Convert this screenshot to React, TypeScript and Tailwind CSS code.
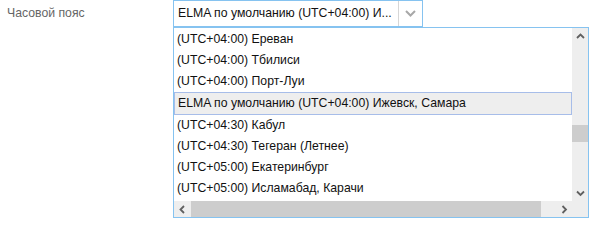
import React from "react";

const rows: { t: string; sel?: boolean }[] = [
  { t: "(UTC+04:00) Ереван" },
  { t: "(UTC+04:00) Тбилиси" },
  { t: "(UTC+04:00) Порт-Луи" },
  { t: "ELMA по умолчанию (UTC+04:00) Ижевск, Самара", sel: true },
  { t: "(UTC+04:30) Кабул" },
  { t: "(UTC+04:30) Тегеран (Летнее)" },
  { t: "(UTC+05:00) Екатеринбург" },
  { t: "(UTC+05:00) Исламабад, Карачи" },
];

function Arrow({ dir }: { dir: "up" | "down" | "left" | "right" }) {
  const d =
    dir === "up"
      ? "M1 5 L4.5 1.5 L8 5"
      : dir === "down"
      ? "M1 1.5 L4.5 5 L8 1.5"
      : dir === "left"
      ? "M5 1 L1.5 4.5 L5 8"
      : "M1.5 1 L5 4.5 L1.5 8";
  const w = dir === "up" || dir === "down" ? 9 : 7;
  const h = dir === "up" || dir === "down" ? 7 : 9;
  return (
    <svg width={w} height={h} viewBox={`0 0 ${w} ${h}`}>
      <path d={d} fill="none" stroke="#606060" strokeWidth="1.8" />
    </svg>
  );
}

export default function App() {
  return (
    <div
      className="flex w-[589px] h-[218px] bg-white text-[12.25px] overflow-hidden"
      style={{ fontFamily: '"Liberation Sans", Arial, sans-serif' }}
    >
      <div className="w-[173px] pl-[7px] leading-[27px] text-[#666666]">Часовой пояс</div>
      <div className="flex flex-col w-[416px]">
        <div className="flex w-[250px] h-[27px] border border-[#86c3f0] bg-white">
          <div className="flex-1 pl-[4px] leading-[25px] text-[#111111] whitespace-nowrap overflow-hidden">
            ELMA по умолчанию (UTC+04:00) И...
          </div>
          <div className="w-[24px] border-l border-[#d6d6d6] flex items-center justify-center">
            <svg width="11" height="7" viewBox="0 0 11 7">
              <path d="M1 1 L5.5 5.5 L10 1" fill="none" stroke="#a8a8a8" strokeWidth="2" />
            </svg>
          </div>
        </div>
        <div className="flex flex-col h-[191px] border border-[#86c3f0] bg-white">
          <div className="flex h-[173px]">
            <div className="flex-1 overflow-hidden pt-[1px]">
              {rows.map((r) =>
                r.sel ? (
                  <div
                    key={r.t}
                    className="h-[23px] border border-[#a7bde9] bg-[#eeeeee] pl-[3px] leading-[21px] text-[#111111] whitespace-nowrap"
                  >
                    {r.t}
                  </div>
                ) : (
                  <div key={r.t} className="h-[21px] pl-[3px] leading-[21px] text-[#111111] whitespace-nowrap">
                    {r.t}
                  </div>
                )
              )}
            </div>
            <div className="w-[16px] bg-[#eeeeee] flex flex-col">
              <div className="h-[16px] flex items-center justify-center">
                <Arrow dir="up" />
              </div>
              <div className="h-[81px]" />
              <div className="h-[17px] bg-[#cdcdcd]" />
              <div className="flex-1" />
              <div className="h-[16px] flex items-center justify-center">
                <Arrow dir="down" />
              </div>
            </div>
          </div>
          <div className="flex h-[16px] bg-[#eeeeee]">
            <div className="w-[17px] flex items-center justify-center">
              <Arrow dir="left" />
            </div>
            <div className="w-[350px] bg-[#cdcdcd]" />
            <div className="flex-1" />
            <div className="w-[16px] flex items-center justify-center">
              <Arrow dir="right" />
            </div>
            <div className="w-[16px]" />
          </div>
        </div>
      </div>
    </div>
  );
}
